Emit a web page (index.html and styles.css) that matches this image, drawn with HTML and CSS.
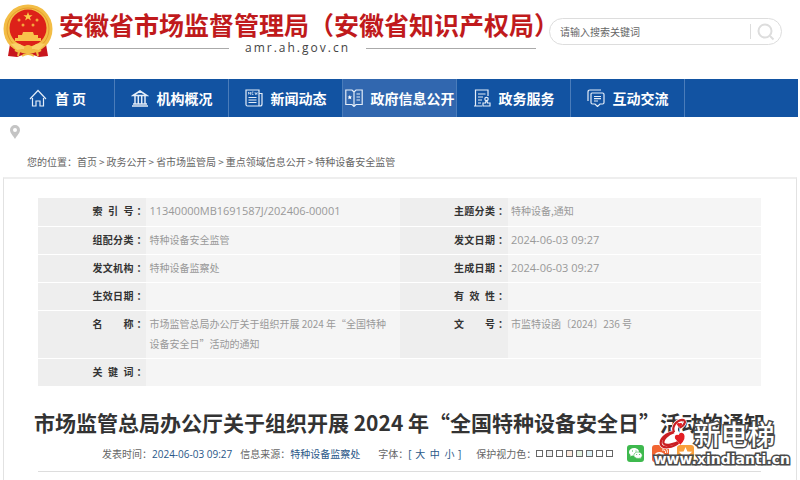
FILE: index.html
```html
<!DOCTYPE html>
<html lang="zh-CN">
<head>
  <meta charset="UTF-8" />
  <meta name="viewport" content="width=device-width, initial-scale=1.0"/>
  <title>安徽省市场监督管理局（安徽省知识产权局）</title>
  <link rel="stylesheet" href="styles.css">
</head>
<body>
  <header class="header">
    <svg class="emblem" viewBox="0 0 50 54" aria-hidden="true">
      <path d="M7 40 L5 52 L14 53 L25 49 L36 53 L45 52 L43 40Z" fill="#c8161d"/>
      <circle cx="25" cy="25" r="24.500" fill="#f3bd45"/>
      <circle cx="25" cy="25" r="21" fill="none" stroke="#e49c2c"/>
      <circle cx="25" cy="24" r="18.500" fill="#dd2119"/>
      <path d="M25 8l1.200 3.200h3.400l-2.700 2 1 3.300-2.900-2-2.900 2 1-3.300-2.700-2h3.400z" fill="#fbc94a"/>
      <g fill="#f5a63c"><circle cx="16" cy="16" r="1.500"/><circle cx="34" cy="16" r="1.500"/><circle cx="20" cy="21" r="1.500"/><circle cx="30" cy="21" r="1.500"/></g>
      <path d="M20 28h10l1 3h4v3h3v3H12v-3h3v-3h4z" fill="#f9c24b"/>
      <path d="M8 40q8-2 12 2 5 3 10 0 4-4 12-2l-6 6q-6-2-11 1-5-3-11-1z" fill="#fad169"/>
      <circle cx="25" cy="45" r="4" fill="#f3bd45"/>
      <path d="M12 46l4 2-1 4M38 46l-4 2 1 4M19 52q6-4 12 0" fill="none" stroke="#f3bd45" stroke-width="2"/>
    </svg>
    <div class="site">
      <div class="site-name">安徽省市场监督管理局（安徽省知识产权局）</div>
      <div class="site-domain">amr.ah.gov.cn</div>
    </div>
    <form class="search">
      <input type="text" placeholder="请输入搜索关键词" aria-label="请输入搜索关键词" />
      <button type="button" aria-label="搜索">
        <svg viewBox="0 0 18 18"><circle cx="8" cy="8" r="6.500"/><path d="M13 13l3.500 3.500"/></svg>
      </button>
    </form>
  </header>

  <nav class="nav">
    <a href="#">
      <svg viewBox="0 0 18 18"><path d="M1 10L9 1.500 17 10M3.500 9v8h3.500v-5h4v5h3.500V9"/></svg>
      首 页
    </a>
    <a href="#">
      <svg viewBox="0 0 18 18"><path d="M2 6.500L9 2l7 4.500zM4 7v8M7.300 7v8M10.700 7v8M14 7v8M2 15h14M1 17h16" stroke-width="1.500"/></svg>
      机构概况
    </a>
    <a href="#">
      <svg viewBox="0 0 18 18"><path d="M1 1h13v16H2.500Q1 17 1 15.500zM14 4.500h3V15q0 2-2 2h-2M3.500 8.500h8M3.500 11h8M3.500 13.500h8"/><path d="M3.500 3v2.500M3.500 3l2 2.500V3M7 3h1.500M7 5.500h1.500M7 3v2.500M10 3l.5 2.500L11.200 4l.6 1.500.4-2.500" stroke-width=".7"/></svg>
      新闻动态
    </a>
    <a href="#" class="active">
      <svg viewBox="0 0 18 18"><path d="M9 3L7 1H.800v14.500H7l2 2 2-2h6.200V1H11L9 3v14M11.500 5h3.500M11.500 8h3.500M11.500 11h3.500"/><path d="M4.800 6l.7 1.500h1.500L5.900 8.600l.4 1.700-1.500-.9-1.500.9.400-1.700L2.600 7.500h1.500z" fill="#fff" stroke="none"/></svg>
      政府信息公开
    </a>
    <a href="#">
      <svg viewBox="0 0 18 18"><path d="M9 17H2.500V14M2.500 14V1H15v6M1 17h2M5 5h7.500M5 8h5M5 11h4M5 14h3"/><circle cx="13.500" cy="10" r="1.700"/><path d="M13 12l-.5 2H10v3h7v-3h-2.500l-.5-2"/></svg>
      政务服务
    </a>
    <a href="#">
      <svg viewBox="0 0 18 18"><path d="M1 12V3q0-2 2-2h11M5 4h10.500q1.500 0 1.500 1.500v8q0 1.500-1.500 1.500H13l-2.500 2.500L8 15H5.500Q4 15 4 13.500V5q0-1 1-1M7 7.500h7M7 9.700h7M7 12h4"/></svg>
      互动交流
    </a>
  </nav>

  <div class="location">
    <svg viewBox="0 0 10 14" aria-hidden="true"><path d="M5 0a5 5 0 0 1 5 5c0 3-3 5.500-5 9C3 10.500 0 8 0 5a5 5 0 0 1 5-5zm0 3a2 2 0 1 0 0 4 2 2 0 0 0 0-4z" fill="#c4c4c4"/></svg>
  </div>
  <div class="breadcrumb">
    您的位置：<a href="#">首页</a><i>&gt;</i><a href="#">政务公开</a><i>&gt;</i><a href="#">省市场监管局</a><i>&gt;</i><a href="#">重点领域信息公开</a><i>&gt;</i><a href="#">特种设备安全监管</a>
  </div>

  <main class="content">
    <table class="info">
      <tr>
        <th><span>索 引 号</span>：</th>
        <td class="num">11340000MB1691587J/202406-00001</td>
        <th><span>主题分类</span>：</th>
        <td>特种设备,通知</td>
      </tr>
      <tr>
        <th><span>组配分类</span>：</th>
        <td>特种设备安全监管</td>
        <th><span>发文日期</span>：</th>
        <td class="num">2024-06-03 09:27</td>
      </tr>
      <tr>
        <th><span>发文机构</span>：</th>
        <td>特种设备监察处</td>
        <th><span>生成日期</span>：</th>
        <td class="num">2024-06-03 09:27</td>
      </tr>
      <tr>
        <th><span>生效日期</span>：</th>
        <td></td>
        <th><span>有 效 性</span>：</th>
        <td></td>
      </tr>
      <tr>
        <th><span>名 称</span>：</th>
        <td>市场监管总局办公厅关于组织开展 2024 年“全国特种设备安全日”活动的通知</td>
        <th><span>文 号</span>：</th>
        <td>市监特设函〔2024〕236 号</td>
      </tr>
      <tr>
        <th><span>关 键 词</span>：</th>
        <td colspan="3"></td>
      </tr>
    </table>

    <div class="article-head">
      <h1>市场监管总局办公厅关于组织开展 2024 年“全国特种设备安全日”活动的通知</h1>
      <div class="meta">
        <span>发表时间：<b>2024-06-03 09:27</b></span>
        <span class="source">信息来源：<b>特种设备监察处</b></span>
        <span class="font-size">字体：<b>[ <a href="#">大</a> <a href="#">中</a> <a href="#">小</a> ]</b></span>
        <span class="colors">保护视力色：<i></i><i class="gray"></i><i></i><i class="pink"></i><i class="green"></i><i class="blue"></i><i></i><i></i></span>
        <span class="share">
          <a href="#" class="wechat" aria-label="微信">
            <svg viewBox="0 0 17 17"><path d="M7 3c-2.800 0-5 1.700-5 4 0 1.200.6 2.200 1.600 2.900L3.200 11.500l1.900-1c.6.200 1.200.300 1.900.300 2.800 0 5-1.700 5-3.900S9.800 3 7 3z" fill="#fff"/><path d="M11 7c2.300 0 4.200 1.400 4.200 3.300 0 1-.5 1.800-1.300 2.400l.3 1.300-1.600-.8c-.5.200-1 .2-1.600.2-2.300 0-4.200-1.400-4.200-3.200C6.800 8.400 8.700 7 11 7z" fill="#fff" stroke="#3eb94e" stroke-width=".6"/><path d="M5 6h1M8.500 6h1M9.300 9.500h.8M12 9.500h.8" stroke="#3eb94e"/></svg>
          </a>
          <a href="#" class="weibo" aria-label="微博">
            <svg viewBox="0 0 17 17"><ellipse cx="7.500" cy="10.500" rx="5" ry="3.500" fill="#fff"/><circle cx="7" cy="10.500" r="2" fill="#f05a28"/><path d="M10 5c3-.5 4 1 3.500 3M10 2.800c4-.5 6 2 5.300 5" fill="none" stroke="#fff"/></svg>
          </a>
          <a href="#" class="fav" aria-label="收藏">
            <svg viewBox="0 0 17 17"><path d="M8.500 2l1.900 4.400 4.800.4-3.600 3.200 1.100 4.700-4.200-2.500-4.200 2.500 1.100-4.700L1.800 6.800l4.800-.4z" fill="#fff"/></svg>
          </a>
        </span>
      </div>
      <div class="watermark">
        <div class="mark-top">
          <svg viewBox="0 0 36 36" aria-hidden="true">
            <path d="M17 16c-3-6 2-13 9-14 5 0 4 6-3 9M17 16C8 17 1 23 2 29c1 6 14 5 21-2M26 5c-5 1-9 8-5 12-9 1-14 7-12 11 2 3 9 1 14-3" fill="none" stroke="#fff" stroke-width="4"/>
            <path d="M17 16c-3-6 2-13 9-14 5 0 4 6-3 9M17 16C8 17 1 23 2 29c1 6 14 5 21-2M17 16c-7 2-13 8-12 12 2 4 12 2 18-2" fill="none" stroke="#c91f23" stroke-width="2.500"/>
            <path d="M24 30l-6-7q-1-5 4-4 2-4 6-1 3 5-4 12z" fill="#e31e24" stroke="#fff" stroke-width=".7"/>
            <path d="M22 10l-2-3q1-2 3-1 3-1 3 1 0 2-4 3z" fill="#e31e24"/>
          </svg>
          <span class="mark-name">新电梯</span>
        </div>
        <div class="mark-url">www.xindianti.cn</div>
      </div>
    </div>
  </main>
</body>
</html>
```
FILE: styles.css
```css
* {
  box-sizing: border-box;
}

body {
  margin: 0;
  padding-right: 2px;
  min-height: 100vh;
  display: flex;
  flex-direction: column;
  background: #fff;
  color: #666;
  font-family: "Noto Sans CJK SC", "Open Sans", sans-serif;
  font-size: 10px;
  line-height: 20px;
}

a {
  color: inherit;
  text-decoration: none;
}

i {
  font-style: normal;
}

.header {
  display: flex;
  align-items: flex-start;
  height: 79px;
  padding: 4px 16px 0 3px;
}

.emblem {
  width: 50px;
  height: 54px;
  flex: none;
}

.site {
  margin-left: 6px;
  padding-top: 4px;
  white-space: nowrap;
}

.site-name {
  color: #c01a1c;
  font-size: 25px;
  font-weight: 700;
  line-height: 32px;
  width: 477px;
}

.site-domain {
  display: flex;
  align-items: center;
  gap: 16px;
  color: #444;
  font-family: "Open Sans", sans-serif;
  font-size: 12px;
  line-height: 16px;
  letter-spacing: 2px;
}

.site-domain::before,
.site-domain::after {
  content: "";
  flex: 1;
  height: 1px;
  background: #aaa;
}

.search {
  display: flex;
  align-items: center;
  width: 233px;
  height: 27px;
  margin: 14px 0 0 auto;
  border: 1px solid #ddd;
  border-radius: 14px;
}

.search input {
  flex: 1;
  min-width: 0;
  padding: 0 10px;
  border: none;
  outline: none;
  background: none;
  font: inherit;
}

.search input::placeholder {
  color: #666;
}

.search button {
  display: flex;
  width: 31px;
  height: 15px;
  padding: 0 0 0 6px;
  align-items: center;
  border: none;
  border-left: 1px solid #ddd;
  background: none;
}

.search svg {
  width: 18px;
  height: 18px;
  flex: none;
  fill: none;
  stroke: #ddd;
  stroke-width: 2;
}

.nav {
  display: flex;
  height: 38px;
  padding-left: 1px;
  background: #1253a2;
}

.nav a {
  display: flex;
  flex: 0 0 114px;
  align-items: center;
  justify-content: center;
  gap: 8px;
  border-right: 1px solid #4a7cba;
  color: #fff;
  font-size: 14px;
  font-weight: 700;
  white-space: nowrap;
}

.nav a.active {
  background: #3167af;
}

.nav svg {
  width: 18px;
  height: 18px;
  flex: none;
  fill: none;
  stroke: #e4edf8;
  stroke-width: 1.2;
}

.location {
  height: 35px;
  padding: 8px 10px;
}

.location svg {
  display: block;
  width: 10px;
  height: 14px;
}

.breadcrumb {
  padding: 0 27px 5px;
  white-space: nowrap;
}

.breadcrumb i {
  margin: 0 2px;
}

.content {
  flex: 1;
  margin: 0 1px 0 3px;
  padding: 19px 35px 0 34px;
  border: 1px solid #e2e2e2;
  border-top: 2px solid #eee;
  border-bottom: none;
}

.info {
  width: 100%;
  table-layout: fixed;
  border-collapse: collapse;
}

.info th,
.info td {
  height: 28px;
  padding: 3px 8px 4px 3px;
  border-bottom: 1px solid #fff;
  vertical-align: top;
  text-align: left;
}

.info th {
  width: 15%;
  padding: 3px 0 4px;
  background: #eee;
  color: #333;
  text-align: right;
}

.info th span {
  display: inline-block;
  width: 41px;
  margin-right: 3px;
  text-align: justify;
  text-align-last: justify;
}

.info td {
  background: #f5f5f5;
  color: #999;
}

.info .num {
  font-family: "Open Sans", sans-serif;
  font-size: 11px;
}

.article-head {
  position: relative;
  padding: 20px 0 7px;
  border-bottom: 1px solid #ddd;
}

h1 {
  margin: 0 -8px;
  color: #333;
  font-size: 21px;
  line-height: 30px;
  text-align: center;
  white-space: nowrap;
}

.meta {
  display: flex;
  align-items: center;
  padding: 7px 64px 0;
  white-space: nowrap;
}

.meta b {
  color: #2a5788;
  font-family: "Open Sans", "Noto Sans CJK SC", sans-serif;
  font-weight: 400;
}

.source {
  margin-left: 8px;
}

.font-size {
  margin-left: 18px;
}

.font-size a {
  margin: 0 1px;
}

.colors {
  display: flex;
  align-items: center;
  margin-left: 15px;
}

.colors i {
  width: 7px;
  height: 7px;
  margin-right: 3px;
  border: 1px solid #666;
}

.colors .gray {
  background: #eee;
}

.colors .pink {
  background: #fce9dc;
}

.colors .green {
  background: #e3f3e0;
}

.colors .blue {
  background: #dcf0f5;
}

.share {
  display: flex;
  gap: 8px;
  margin-left: 11px;
}

.share a {
  width: 17px;
  height: 17px;
  border-radius: 3px;
}

.share svg {
  display: block;
}

.wechat {
  background: #3eb94e;
}

.weibo {
  background: #f26532;
}

.fav {
  background: #f9a03c;
}

/* site mark over the title corner */
.watermark {
  position: absolute;
  right: -29px;
  bottom: 3px;
  color: #fff;
  -webkit-text-stroke: 3px #4a4a4a;
  paint-order: stroke fill;
  white-space: nowrap;
}

.mark-top {
  display: flex;
  align-items: center;
  padding-left: 5px;
}

.mark-top svg {
  width: 32px;
  height: 32px;
}

.mark-name {
  padding-left: 3px;
  font-size: 27px;
  font-weight: 500;
  line-height: 30px;
}

.mark-url {
  font-family: "DejaVu Sans", sans-serif;
  font-size: 14px;
  font-weight: 700;
  line-height: 18px;
}
```
